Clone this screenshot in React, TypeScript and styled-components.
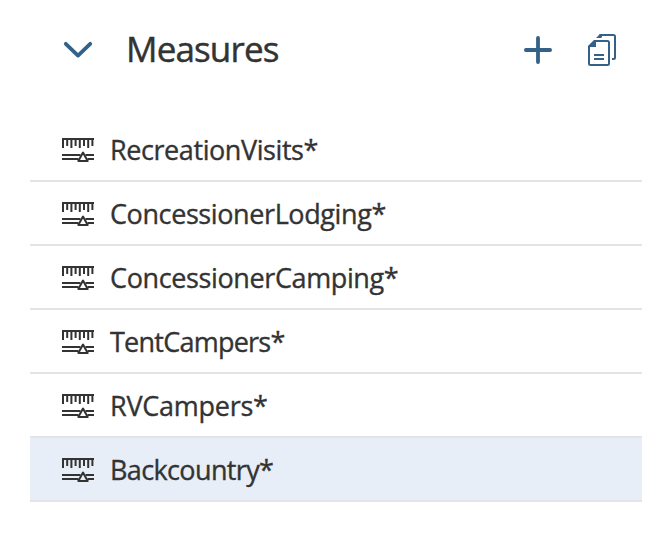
import React from "react";
import styled, { createGlobalStyle } from "styled-components";

const GlobalStyle = createGlobalStyle`
  * { box-sizing: border-box; }
  body {
    margin: 0;
    background: #fff;
    color: #333;
    font-family: "Open Sans", "Liberation Sans", sans-serif;
  }
`;

const Panel = styled.section`
  width: 669px;
  height: 551px;
  padding: 0 27px 0 30px;
  overflow: hidden;
  background: #fff;
`;

const Header = styled.header`
  display: flex;
  align-items: center;
  height: 100px;
  margin-bottom: 18px;
  padding: 0 24px 0 32px;
  color: #346187;
`;

const IconButton = styled.button<{ $gap?: number }>`
  display: flex;
  align-items: center;
  justify-content: center;
  width: 32px;
  height: 36px;
  margin: 0 0 0 ${(p) => p.$gap ?? 0}px;
  padding: 0;
  border: 0;
  background: none;
  color: inherit;
`;

const Title = styled.h2`
  flex: 1;
  margin: 0 0 0 32px;
  padding-bottom: 2px;
  color: #333;
  font-size: 35px;
  font-weight: 400;
  line-height: 48px;
  letter-spacing: -0.85px;
  white-space: nowrap;
  -webkit-text-stroke: 0.45px #333;
`;

const List = styled.ul`
  margin: 0;
  padding: 0;
  list-style: none;
`;

const Row = styled.li<{ $selected?: boolean }>`
  display: flex;
  align-items: center;
  gap: 16px;
  height: 64px;
  padding: 2px 0 0 32px;
  border-bottom: 2px solid #e4e4e4;
  background: ${(p) => (p.$selected ? "#e7eef7" : "#fff")};
`;

const Label = styled.span<{ $spacing: number }>`
  font-size: 27px;
  line-height: 36px;
  letter-spacing: ${(p) => p.$spacing}px;
  white-space: nowrap;
  -webkit-text-stroke: 0.35px #333;
`;

const MeasureIcon = () => (
  <svg width="32" height="26" viewBox="0 0 32 26" fill="none" stroke="#333" strokeWidth="2">
    <path d="M0 2h32" />
    <path strokeWidth="2" d="M1 2v9M5.2 2v7M9.4 2v9M13.6 2v7M17.8 2v9M22 2v7M26.2 2v9M30.4 2v7" />
    <path d="M0 18h18.5M0 22h16.5M23.5 18h8.5M25.5 22h6.5" />
    <path strokeLinejoin="round" d="M21 15.6l-4.7 8.4h9.4z" />
  </svg>
);

const measures = [
  { name: "RecreationVisits*", spacing: -0.42 },
  { name: "ConcessionerLodging*", spacing: -0.4 },
  { name: "ConcessionerCamping*", spacing: -0.38 },
  { name: "TentCampers*", spacing: -0.76 },
  { name: "RVCampers*", spacing: -0.26 },
  { name: "Backcountry*", spacing: -0.63, selected: true },
];

export default function App() {
  return (
    <>
      <GlobalStyle />
      <Panel>
        <Header>
          <IconButton aria-label="Collapse measures">
            <svg width="32" height="32" viewBox="0 0 32 32" fill="none" stroke="currentColor" strokeWidth="3.8" strokeLinecap="round" strokeLinejoin="round">
              <path d="M3.8 9.8L16 21.6L28.2 9.8" />
            </svg>
          </IconButton>
          <Title>Measures</Title>
          <IconButton aria-label="Add measure">
            <svg width="32" height="32" viewBox="0 0 32 32" fill="none" stroke="currentColor" strokeWidth="3.8" strokeLinecap="round">
              <path d="M3.9 16h24.2M16 3.9v24.2" />
            </svg>
          </IconButton>
          <IconButton aria-label="Copy measures" $gap={32}>
            <svg width="32" height="32" viewBox="0 0 32 32" fill="none" stroke="currentColor" strokeWidth="2">
              <path d="M9 7h12.5q1.500 0 1.500 1.500v21q0 1.500-1.500 1.500h-17Q3 31 3 29.500V13z" />
              <path fill="currentColor" stroke="none" d="M8 6h2v7H2v-1z" />
              <path d="M13.500 1H27.500q1.500 0 1.500 1.500v21q0 1.500-1.500 1.500H26" />
              <path fill="currentColor" stroke="none" d="M10 4l4-4h2v3l-1 1z" />
              <path d="M8 21h10M8 25h10" />
            </svg>
          </IconButton>
        </Header>
        <List>
          {measures.map((m) => (
            <Row key={m.name} $selected={m.selected}>
              <MeasureIcon />
              <Label $spacing={m.spacing}>{m.name}</Label>
            </Row>
          ))}
        </List>
      </Panel>
    </>
  );
}
